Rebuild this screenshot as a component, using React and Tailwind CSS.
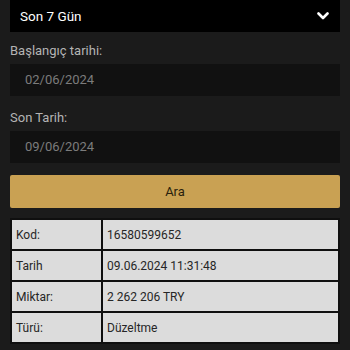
import React from 'react';

const rows = [
  ['Kod:', '16580599652'],
  ['Tarih', '09.06.2024 11:31:48'],
  ['Miktar:', '2 262 206 TRY'],
  ['Türü:', 'Düzeltme'],
];

export default function App() {
  return (
    <div
      className="w-[350px] h-[350px] overflow-hidden bg-[#1b1b1b] px-[10px]"
      style={{ fontFamily: 'Roboto, "Liberation Sans", sans-serif' }}
    >
      {/* period select */}
      <div className="h-[32px] bg-black flex items-center justify-between pl-[10px] pr-[11px]">
        <span className="text-white text-[13.5px] leading-[20px]">Son 7 Gün</span>
        <svg width="12" height="8" viewBox="0 0 12 8" fill="none">
          <polyline points="1.5,1.5 6,6 10.5,1.5" stroke="white" strokeWidth="2.6" strokeLinecap="round" strokeLinejoin="round" />
        </svg>
      </div>

      <div className="mt-[9px] text-[13px] leading-[20px] text-[#b4b4b4]">Başlangıç tarihi:</div>
      <div className="mt-[3px] h-[32px] bg-[#111111] flex items-center pl-[15px] text-[13px] text-[#7c7c7c]">
        02/06/2024
      </div>

      <div className="mt-[12px] text-[13px] leading-[20px] text-[#b4b4b4]">Son Tarih:</div>
      <div className="mt-[3px] h-[32px] bg-[#111111] flex items-center pl-[15px] text-[13px] text-[#7c7c7c]">
        09/06/2024
      </div>

      <button className="mt-[12px] w-full h-[33px] bg-[#c9a153] rounded-[2px] text-[13px] text-[#2a1f0c] flex items-center justify-center">
        Ara
      </button>

      <div className="mt-[10px] grid grid-cols-[89px_1fr] gap-[2px] p-[2px] bg-[#0f0f0f]">
        {rows.map(([k, v]) => (
          <React.Fragment key={k}>
            <div className="h-[29px] bg-[#dcdcdc] flex items-center pl-[4px] text-[12px] text-[#262626]">{k}</div>
            <div className="h-[29px] bg-[#dcdcdc] flex items-center pl-[4px] text-[12px] text-[#262626]">{v}</div>
          </React.Fragment>
        ))}
      </div>
    </div>
  );
}
